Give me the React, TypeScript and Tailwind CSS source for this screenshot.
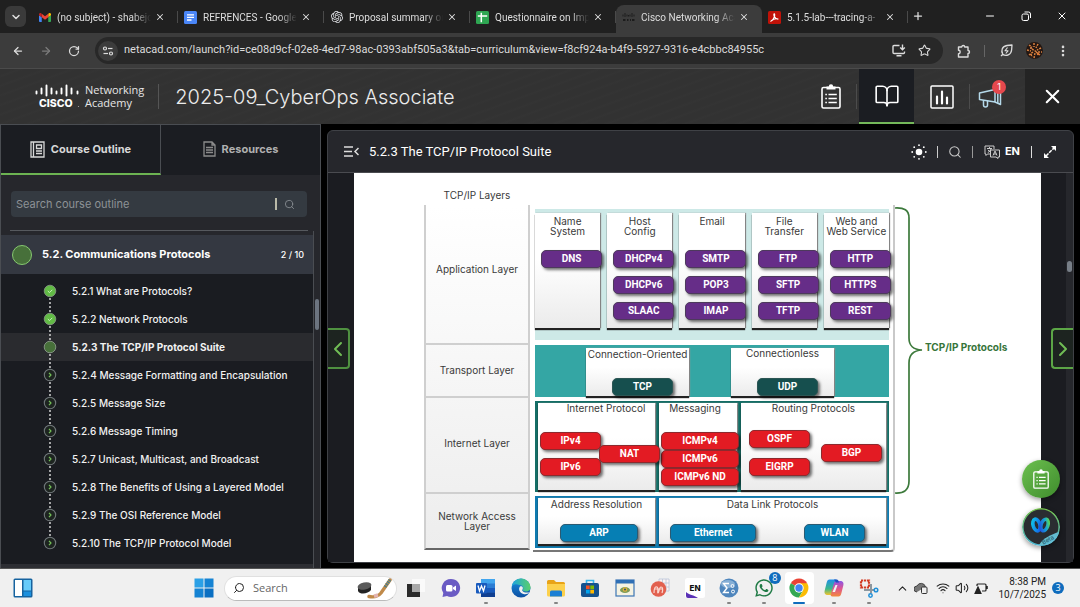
import React from 'react';
import {
  ArrowLeft, ArrowRight, ChevronDown, ChevronLeft, ChevronRight, ChevronUp, EllipsisVertical,
  Minus, Plus, RotateCw, Search, Star, Volume2, Wifi, X, BookOpen,
} from 'lucide-react';
import { SiOpenai } from 'react-icons/si';
import { FaWhatsapp } from 'react-icons/fa';

/* ---------- Browser chrome ---------- */

const GmailIcon = () => (
  <svg viewBox="0 0 24 18" className="h-[9px] w-3">
    <path d="M1.6 18H5.500V8.600L0 4.500V16.400C0 17.300.7 18 1.600 18z" fill="#4285f4" />
    <path d="M18.500 18h3.900c.9 0 1.600-.7 1.600-1.600V4.500l-5.500 4.100z" fill="#34a853" />
    <path d="M18.500 1.600v7L24 4.500V2.400c0-2-2.300-3.200-3.900-2z" fill="#fbbc04" />
    <path d="M5.500 8.600v-7L12 6.500l6.500-4.900v7L12 13.500z" fill="#ea4335" />
    <path d="M0 2.400v2.100l5.500 4.100v-7L3.900.4C2.300-.8 0 .4 0 2.400z" fill="#c5221f" />
  </svg>
);

const DocsIcon = () => (
  <svg viewBox="0 0 13 13" className="size-[13px]">
    <rect width="13" height="13" rx="1.500" fill="#4a86f7" />
    <path d="M3 3.800h7M3 6.400h7M3 9h4.500" stroke="#fff" strokeWidth="1.300" />
  </svg>
);

const SheetsIcon = () => (
  <svg viewBox="0 0 13 13" className="size-[13px]">
    <rect width="13" height="13" rx="1.500" fill="#2ea652" />
    <path d="M5.300 1.800v9.400M1.800 5h9.400" stroke="#fff" strokeWidth="1.500" />
  </svg>
);

const CiscoTabIcon = () => (
  <svg viewBox="0 0 13 10" className="h-[10px] w-[13px]">
    <path d="M1 2.500v2M3 1v4M5 2.500v2M6.500 3v1.500M8 2.500v2M10 1v4M12 2.500v2" stroke="#1c1c1c" strokeWidth="1" />
    <path d="M1 8h2.500M5 8h1.500M8 8h1M10 8h2.500" stroke="#1c1c1c" strokeWidth="2" />
  </svg>
);

const PdfIcon = () => (
  <svg viewBox="0 0 13 13" className="size-[13px]">
    <rect width="13" height="13" rx="1.500" fill="#c01208" />
    <path d="M2.800 10.200c1.600-.6 3-2.600 3.600-4.600.4-1.500.3-2.800-.1-2.800-.5 0-.6 1.300 0 2.600.8 1.700 2.200 2.700 4 2.700-2-.6-5 0-6.600 1.500" fill="none" stroke="#fff" strokeWidth="1.200" strokeLinecap="round" />
  </svg>
);

const tabs = [
  { title: '(no subject) - shabejc', icon: <GmailIcon /> },
  { title: 'REFRENCES - Google', icon: <DocsIcon /> },
  { title: 'Proposal summary or', icon: <SiOpenai className="size-3 text-gray-200" /> },
  { title: 'Questionnaire on Imp', icon: <SheetsIcon /> },
  { title: 'Cisco Networking Aca', icon: <CiscoTabIcon />, active: true },
  { title: '5.1.5-lab---tracing-a-', icon: <PdfIcon /> },
];

function TabStrip() {
  return (
    <div className="flex h-[33px] shrink-0 items-end bg-[#202020] text-[#dedede]">
      <button aria-label="Search tabs" className="mb-[6px] ml-[5px] mr-[6px] flex size-[21px] shrink-0 items-center justify-center rounded-md bg-[#3a3a3a]">
        <ChevronDown className="size-3" strokeWidth={3} />
      </button>
      <div role="tablist" className="flex min-w-0">
        {tabs.map((t) => (
          <div
            key={t.title}
            role="tab"
            aria-selected={!!t.active}
            className={
              t.active
                ? 'flex h-7 w-[146px] min-w-0 items-center rounded-t-lg bg-[#3c3c3c] pb-1 pl-[6px]'
                : 'flex h-7 w-[146px] min-w-0 items-center pb-1 pl-[6px]'
            }
          >
            <span className="flex w-[13px] shrink-0 justify-center">{t.icon}</span>
            <span className="ml-[6px] w-[94px] whitespace-nowrap font-[Roboto,sans-serif] text-[10px] [mask-image:linear-gradient(to_right,black_80%,transparent)]">
              {t.title}
            </span>
            <button aria-label={'Close ' + t.title} className="ml-1">
              <X className="size-[10px]" strokeWidth={2.5} />
            </button>
            {!t.active && <span className="ml-auto h-3 w-px bg-[#4a4a4a]" />}
          </div>
        ))}
      </div>
      <button aria-label="New tab" className="mb-[11px] ml-1"><Plus className="size-3" strokeWidth={2.500} /></button>
      <div className="mb-[11px] ml-auto mr-3 flex gap-[24px] text-white">
        <button aria-label="Minimize"><Minus className="size-3" /></button>
        <button aria-label="Restore">
          <svg viewBox="0 0 12 12" className="size-3" fill="none" stroke="currentColor" strokeWidth="1">
            <rect x="2" y="4" width="6.500" height="6.500" rx="1.500" />
            <path d="M4.500 2h4a2 2 0 0 1 2 2v4" />
          </svg>
        </button>
        <button aria-label="Close window"><X className="size-3" /></button>
      </div>
    </div>
  );
}

function Toolbar() {
  return (
    <div className="flex h-9 shrink-0 items-center border-b border-[#4b4b4b] bg-[#3c3c3c] pl-3 pr-[10px] text-[#dcdcdc]">
      <button aria-label="Back"><ArrowLeft className="size-3" strokeWidth={2.500} /></button>
      <button aria-label="Forward" className="ml-4 text-[#7b7b7b]"><ArrowRight className="size-3" strokeWidth={2.500} /></button>
      <button aria-label="Reload" className="ml-4"><RotateCw className="size-3" strokeWidth={2.500} /></button>
      <div className="ml-[15px] flex h-[27px] min-w-0 flex-1 items-center rounded-full bg-[#282828] pl-[3px] pr-3">
        <button aria-label="Site information" className="flex size-5 shrink-0 items-center justify-center rounded-full bg-[#3c3c3c]">
          <svg viewBox="0 0 12 12" className="size-3" fill="none" stroke="currentColor" strokeWidth="1.200">
            <circle cx="3" cy="3.500" r="1.500" /><path d="M6 3.500h4.500" />
            <circle cx="9" cy="8.500" r="1.500" /><path d="M1.500 8.500H6" />
          </svg>
        </button>
        <input
          aria-label="Address"
          readOnly
          value="netacad.com/launch?id=ce08d9cf-02e8-4ed7-98ac-0393abf505a3&tab=curriculum&view=f8cf924a-b4f9-5927-9316-e4cbbc84955c"
          className="ml-[6px] min-w-0 flex-1 bg-transparent font-[Roboto,sans-serif] text-[11px] outline-none"
        />
        <button aria-label="Install app">
          <svg viewBox="0 0 14 13" className="h-[13px] w-[14px]" fill="none" stroke="currentColor" strokeWidth="1.400">
            <path d="M7.500 1.500H2a1 1 0 0 0-1 1V8.500a1 1 0 0 0 1 1h9.500a1 1 0 0 0 1-1V7.500M4.500 11.800H9.500M10.500.5v5M8.200 3.500l2.300 2.300 2.300-2.300" />
          </svg>
        </button>
        <button aria-label="Bookmark" className="ml-3"><Star className="size-[13px]" /></button>
      </div>
      <button aria-label="Extensions" className="ml-[14px]">
        <svg viewBox="0 0 14 14" className="size-[14px]" fill="none" stroke="currentColor" strokeWidth="1.400" strokeLinejoin="round">
          <path d="M1.500 3h3.200a1.500 1.500 0 0 1 3 0H11v3.500a1.500 1.500 0 0 1 0 3V13H1.500V9.700a1.700 1.700 0 0 0 0-3.400z" />
        </svg>
      </button>
      <span className="ml-[13px] h-3 w-px bg-[#666]" />
      <button aria-label="Energy saver" className="ml-[15px]">
        <svg viewBox="0 0 13 13" className="size-[13px]" fill="none" stroke="currentColor" strokeWidth="1.300" strokeLinejoin="round">
          <path d="M1 12l1.800-1.800M2.800 10.200C.8 7 2 2 7 1.500l5-.5-.4 5C11.200 11 6 12.500 2.800 10.200z" />
          <path d="M7.500 3.500L5 6.800h3L5.800 9.500" strokeWidth="1.100" />
        </svg>
      </button>
      <button aria-label="Profile" className="ml-[13px]">
        <svg viewBox="0 0 17 17" className="size-[17px]">
          <circle cx="8.500" cy="8.500" r="8.500" fill="#241712" />
          <path d="M3 3l3 2M8 1v4M12 2l-2 4M15 6l-4 2M1 8l4 1M3 13l4-3M8 16l1-5M14 13l-4-3M6 7l5 3M12 10l4 0M5 12l1 3" stroke="#d9803f" strokeWidth="1.500" strokeDasharray="2 1" />
          <circle cx="5" cy="6" r="1" fill="#e8925a" /><circle cx="12" cy="12" r="1.200" fill="#e07a35" />
        </svg>
      </button>
      <button aria-label="Menu" className="ml-[13px]"><EllipsisVertical className="size-[14px]" strokeWidth={2.500} /></button>
    </div>
  );
}

/* ---------- Course header ---------- */

const ClipboardIcon = ({ className }: { className: string }) => (
  <svg viewBox="0 0 20 25" className={className} fill="none" stroke="currentColor" strokeWidth="1.600">
    <rect x="1" y="3.500" width="18" height="20.500" rx="1.500" />
    <path d="M5.500 2.500h2.300a2.200 2.200 0 0 1 4.400 0h2.300v3h-9z" fill="currentColor" stroke="none" />
    <path d="M4.300 10.500h1.600M4.300 14.500h1.600M4.300 18.500h1.600M7.500 10.500h8.300M7.500 14.500h8.300M7.500 18.500h8.300" />
  </svg>
);

function CourseHeader() {
  return (
    <header className="flex h-[55px] shrink-0 items-center bg-[repeating-linear-gradient(160deg,#323232_0,#323232_5px,#343434_7px,#323232_9px)] text-white">
      <a href="#home" aria-label="Cisco Networking Academy" className="ml-[35px] flex items-center">
        <svg viewBox="0 0 45 26" className="h-[26px] w-[45px]">
          <g stroke="#fff" strokeWidth="1.900" strokeLinecap="round">
            <path d="M1.500 7.500v2M6.500 4.500v5M11.500 1.500v10M16.500 4.500v5M21.500 7.500v2M26.500 4.500v5M31.500 1.500v10M36.500 4.500v5M42.500 7.500v2" />
          </g>
          <text x="4" y="23" fill="#fff" fontSize="10.500" fontWeight="800" fontFamily="Inter, sans-serif">CISCO</text>
          <circle cx="43.500" cy="22.500" r=".6" fill="#aaa" />
        </svg>
        <span className="ml-[5px] pb-[2px] font-['Open_Sans',sans-serif] text-[11px] leading-[13px] text-[#e6e6e6]">
          Networking<br />Academy
        </span>
      </a>
      <span className="ml-[14px] h-[25px] w-px bg-[#555]" />
      <h1 className="ml-4 whitespace-nowrap text-[20px] font-light text-[#ececec]">2025-09_CyberOps Associate</h1>
      <nav className="ml-auto flex h-full">
        <button aria-label="Tasks" className="flex w-[55px] items-center justify-between pl-[17px] pr-[2px]">
          <ClipboardIcon className="h-[25px] w-5" />
          <span className="h-[25px] w-px bg-[#4c4c4c]" />
        </button>
        <button aria-label="Course" className="flex w-[55px] items-center justify-center border-b-2 border-[#74b85a] bg-[#1b1d22] pt-px">
          <BookOpen className="size-[26px]" strokeWidth={1.500} />
        </button>
        <button aria-label="Grades" className="flex w-[55px] items-center justify-center">
          <svg viewBox="0 0 24 24" className="size-6" fill="none" stroke="currentColor" strokeWidth="1.500">
            <rect x="1" y="1" width="22" height="22" rx="1" />
            <path d="M7 11.500v7M12 6.500v12M17 12.500v6" strokeWidth="2.200" strokeLinecap="round" />
          </svg>
        </button>
        <button aria-label="Announcements" className="relative flex w-[56px] items-center">
          <span className="h-[25px] w-px bg-[#4c4c4c]" />
          <svg viewBox="0 0 24 22" className="ml-2 h-[22px] w-6" fill="none" stroke="#b5d9ea" strokeWidth="1.500" strokeLinejoin="round">
            <path d="M1.500 7L17 3.500V16L1.500 13.500z" />
            <path d="M17 3.500L22.500 1.500V18.500L17 16" />
            <path d="M19.800 3v14" />
            <path d="M5.500 14V19a2 2 0 0 0 4 0v-4.500" />
          </svg>
          <span className="absolute left-[23px] top-[11px] flex size-[14px] items-center justify-center rounded-full bg-[#e5484d] text-[9px]">1</span>
        </button>
        <button aria-label="Close course" className="flex w-[55px] items-center justify-center bg-[#242424]"><X className="size-[23px]" strokeWidth={2.200} /></button>
      </nav>
    </header>
  );
}

/* ---------- Sidebar ---------- */

const topics = [
  ['5.2.1 What are Protocols?', 'done'],
  ['5.2.2 Network Protocols', 'done'],
  ['5.2.3 The TCP/IP Protocol Suite', 'current'],
  ['5.2.4 Message Formatting and Encapsulation', 'todo'],
  ['5.2.5 Message Size', 'todo'],
  ['5.2.6 Message Timing', 'todo'],
  ['5.2.7 Unicast, Multicast, and Broadcast', 'todo'],
  ['5.2.8 The Benefits of Using a Layered Model', 'todo'],
  ['5.2.9 The OSI Reference Model', 'todo'],
  ['5.2.10 The TCP/IP Protocol Model', 'todo'],
];

function StatusDot({ state, last }: { state: string; last: boolean }) {
  return (
    <svg viewBox="0 0 14 28" className="h-7 w-[14px] shrink-0 overflow-visible">
      {!last && <path d="M7 21v14" stroke="#d0d0d0" strokeWidth="1.500" strokeDasharray="2 2" />}
      {state === 'todo' ? (
        <>
          <circle cx="7" cy="14" r="5.700" fill="#1d2420" stroke="#70777a" strokeWidth="1.100" />
          <path d="M6 11.800l2 2.200-2 2.200" fill="none" stroke="#74bf58" strokeWidth="1.200" />
        </>
      ) : state === 'done' ? (
        <>
          <circle cx="7" cy="14" r="5.800" fill="#62bb46" stroke="#8a9a88" strokeWidth="0.800" />
          <path d="M4.800 14l1.700 1.600 2.800-2.800" fill="none" stroke="#c9f0bb" strokeWidth="1" />
        </>
      ) : (
        <circle cx="7" cy="14" r="5.800" fill="#47703a" stroke="#8a9a88" strokeWidth="0.900" />
      )}
    </svg>
  );
}

function Sidebar() {
  return (
    <aside className="flex w-[321px] shrink-0 flex-col border-x border-t border-[#4a4d52] bg-[#26272c]">
      <div role="tablist" className="flex h-[50px] shrink-0 bg-[#1b1d22] text-[11px] font-bold">
        <button role="tab" aria-selected="true" className="flex flex-1 items-center justify-center gap-[6px] border-b-2 border-r border-b-[#6cb352] border-r-[#4a4d52] text-[#d8d8d8]">
          <svg viewBox="0 0 15 17" className="h-[17px] w-[15px]" fill="none" stroke="currentColor" strokeWidth="1.300">
            <path d="M1 1h13v15H1zM3.500 1v15" /><path d="M6.500 4h5v3.500h-5zM6 10h6M6 12.500h6" />
          </svg>
          Course Outline
        </button>
        <button role="tab" aria-selected="false" className="flex flex-1 items-center justify-center gap-[6px] pb-[2px] text-[#b0b0b0]">
          <svg viewBox="0 0 13 16" className="h-4 w-[13px]" fill="none" stroke="#8c8c8c" strokeWidth="1.300">
            <path d="M1 1h8l3 3v11H1zM9 1v3h3M3 6.500h7M3 9h7M3 11.500h7" />
          </svg>
          Resources
        </button>
      </div>
      <div className="ml-[10px] mr-[13px] mt-4 flex h-[26px] shrink-0 items-center rounded-sm bg-[#343a41] pl-[5px] pr-3">
        <input aria-label="Search course outline" placeholder="Search course outline" className="min-w-0 flex-1 bg-transparent text-[11px] outline-none placeholder:text-[#8d9296]" />
        <span className="mr-[7px] h-3 w-[2px] bg-[#b9b9a8]" />
        <Search className="size-[11px] text-[#8d9296]" strokeWidth={1.800} />
      </div>
      <div className="ml-[9px] mr-3 mt-[13px] h-px shrink-0 bg-[#56595e]" />
      <div className="flex min-h-0 flex-1">
        <div className="flex min-w-0 flex-1 flex-col border-r border-[#4a4d52] pt-1">
          <button className="flex h-[39px] shrink-0 items-center bg-[#343841] pl-[11px] pr-[9px] text-white">
            <span className="size-5 rounded-full border border-[#86c870] bg-[#47703a]" />
            <span className="ml-[10px] text-[11px] font-bold">5.2. Communications Protocols</span>
            <span className="ml-auto text-[9px] font-medium">2 / 10</span>
          </button>
          <ul className="flex-1 overflow-hidden bg-[#1a1c21] pt-[3px] text-[#f2f2f2]">
            {topics.map(([title, state], i) => (
              <li key={title}>
                <a
                  href={'#topic-' + (i + 1)}
                  className={
                    state === 'current'
                      ? 'flex h-7 items-center gap-[15px] bg-[#2a2b2f] pl-[42px] text-[10px] font-bold'
                      : 'flex h-7 items-center gap-[15px] pl-[42px] text-[10px] font-medium'
                  }
                >
                  <StatusDot state={state} last={i === topics.length - 1} />
                  <span className="whitespace-nowrap">{title}</span>
                </a>
              </li>
            ))}
          </ul>
          <div className="h-1 shrink-0 bg-[#2d2e33]" />
        </div>
        <div className="w-[6px] shrink-0 pl-px pt-[68px]"><div className="h-[31px] w-1 rounded-sm bg-[#6c7480]" /></div>
      </div>
    </aside>
  );
}

/* ---------- Protocol diagram ---------- */

const tones = {
  purple: 'bg-[#662d88] border-[#4d3a5c]',
  teal: 'bg-[#164f4e] border-[#2c5654]',
  red: 'bg-[#e31b23] border-[#8c2a2e]',
  blue: 'bg-[#067fb4] border-[#2b5a72]',
};

function Node({ name, tone, wide }: { name: string; tone: keyof typeof tones; wide?: string }) {
  return (
    <div className={`flex h-[18px] shrink-0 items-center justify-center rounded-[5px] border pb-px font-[Roboto,sans-serif] text-[10px] font-bold text-white shadow-[2px_2px_3px_rgba(0,0,0,0.55)] ${wide ?? 'w-[61px]'} ${tones[tone]}`}>
      {name}
    </div>
  );
}

const card = 'bg-linear-to-b from-white from-40% to-[#ebebeb] shadow-[0_2px_1px_#222,1px_0_1px_#999]';

const services = [
  { name: ['Name', 'System'], nodes: ['DNS'] },
  { name: ['Host', 'Config'], nodes: ['DHCPv4', 'DHCPv6', 'SLAAC'] },
  { name: ['Email'], nodes: ['SMTP', 'POP3', 'IMAP'] },
  { name: ['File', 'Transfer'], nodes: ['FTP', 'SFTP', 'TFTP'] },
  { name: ['Web and', 'Web Service'], nodes: ['HTTP', 'HTTPS', 'REST'] },
];

function Diagram() {
  return (
    <div className="flex pl-[70px] pt-4 text-[10px] leading-[10px] text-[#3a3a3a]">
      <div className="w-[106px] shrink-0 text-center">
        <div className="h-4 pt-px">TCP/IP Layers</div>
        <div className="flex flex-col divide-y-2 divide-[#cfcfcf] border-x-2 border-b-2 border-x-[#cfcfcf] border-b-[#666] bg-linear-to-b from-white to-[#ededed]">
          <div className="flex h-[140px] items-center justify-center pb-[10px]">Application Layer</div>
          <div className="flex h-[53px] items-center justify-center pb-[2px]">Transport Layer</div>
          <div className="flex h-24 items-center justify-center pb-1">Internet Layer</div>
          <div className="flex h-[54px] items-center justify-center">Network Access<br />Layer</div>
        </div>
      </div>

      <div className="ml-[3px] mt-4 w-[362px] shrink-0 rounded-br border-b-2 border-r-2 border-b-[#777] border-r-[#c9c9c9] pl-[2px] pr-1 pt-1">
        <div className="grid h-[131px] grid-cols-5 items-start gap-[7px] bg-[#cde9e7] pt-1">
          {services.map((s) => (
            <div key={s.name[0]} className={`h-[115px] text-center ${card}`}>
              <div className="-mx-2 h-[37px] pt-[3px]">
                {s.name.map((line) => <div key={line}>{line}</div>)}
              </div>
              <div className="flex flex-col gap-2 pl-[6px]">
                {s.nodes.map((n) => <Node key={n} name={n} tone="purple" />)}
              </div>
            </div>
          ))}
        </div>

        <div className="mt-[5px] flex h-[52px] gap-[42px] bg-[#34a6a4] pl-[51px] pt-[3px]">
          <div className={`flex h-12 w-[103px] flex-col text-center ${card}`}>
            <div className="flex-1 whitespace-nowrap pt-px">Connection-Oriented</div>
            <div className="pl-[26px]"><Node name="TCP" tone="teal" /></div>
          </div>
          <div className={`flex h-12 w-[103px] flex-col text-center ${card}`}>
            <div className="flex-1">Connectionless</div>
            <div className="pl-[26px]"><Node name="UDP" tone="teal" /></div>
          </div>
        </div>

        <div className="mt-1 flex h-[91px] gap-[4px] bg-[#146e66] px-[3px] pb-[2px] pt-[2px]">
          <div className={`w-[117px] ${card}`}>
            <div className="h-[29px] pl-[19px] text-center">Internet Protocol</div>
            <div className="flex items-center pl-[2px]">
              <div className="flex flex-col gap-2"><Node name="IPv4" tone="red" /><Node name="IPv6" tone="red" /></div>
              <div className="z-10 -ml-[2px]"><Node name="NAT" tone="red" /></div>
            </div>
          </div>
          <div className={`w-[78px] ${card}`}>
            <div className="h-[29px] pr-[6px] text-center">Messaging</div>
            <div className="flex flex-col pl-[2px]">
              <Node name="ICMPv4" tone="red" wide="w-[78px]" />
              <Node name="ICMPv6" tone="red" wide="w-[78px]" />
              <Node name="ICMPv6 ND" tone="red" wide="w-[78px]" />
            </div>
          </div>
          <div className={`flex-1 ${card}`}>
            <div className="h-[27px] text-center">Routing Protocols</div>
            <div className="flex items-center gap-[11px] pl-2">
              <div className="flex flex-col gap-[10px]"><Node name="OSPF" tone="red" /><Node name="EIGRP" tone="red" /></div>
              <Node name="BGP" tone="red" />
            </div>
          </div>
        </div>

        <div className="mb-[2px] mt-1 flex h-[52px] gap-[4px] bg-[#0f7bb0] px-[3px] pb-1 pt-[2px]">
          <div className={`w-[117px] ${card}`}>
            <div className="h-[26px] pt-px text-center">Address Resolution</div>
            <div className="pl-[22px]"><Node name="ARP" tone="blue" wide="w-[78px]" /></div>
          </div>
          <div className={`flex-1 ${card}`}>
            <div className="h-[26px] pt-px text-center">Data Link Protocols</div>
            <div className="flex gap-[48px] pl-[11px]">
              <Node name="Ethernet" tone="blue" wide="w-[86px]" /><Node name="WLAN" tone="blue" />
            </div>
          </div>
        </div>
      </div>

      <svg viewBox="0 0 28 290" className="mt-4 h-[290px] w-7 shrink-0" fill="none" stroke="#3d7a3c" strokeWidth="1.700">
        <path d="M0 3C9 2.500 14 5 14 13V133C14 141 18 144.500 27 145C18 145.500 14 150 14 158V276C14 285 9 288.500 0 288" />
      </svg>
      <div className="ml-[2px] mt-[153px] whitespace-nowrap font-bold text-[#37753a]">TCP/IP Protocols</div>
    </div>
  );
}

/* ---------- Content panel ---------- */

function Content() {
  return (
    <main className="relative mb-[5px] ml-[6px] mr-[6px] mt-[6px] flex min-w-0 flex-1 flex-col rounded-md border border-[#3f4146] bg-[#26272c] text-white">
      <div className="flex h-[42px] shrink-0 items-center border-b border-[#4a4b50] pl-4 pr-4">
        <button aria-label="Collapse outline">
          <svg viewBox="0 0 15 11" className="h-[11px] w-[15px]" fill="none" stroke="#ddd" strokeWidth="1.500">
            <path d="M0 1h9M0 5.500h8M0 10h9M14.500 2l-3.500 3.500L14.500 9" />
          </svg>
        </button>
        <h2 className="ml-[10px] font-[Roboto,sans-serif] text-[13px]">5.2.3 The TCP/IP Protocol Suite</h2>
        <div className="ml-auto flex items-center">
          <button aria-label="Theme">
            <svg viewBox="0 0 16 16" className="size-4" fill="#fff">
              <circle cx="8" cy="8" r="3.300" />
              <g><circle cx="8" cy="1.200" r=".9" /><circle cx="8" cy="14.800" r=".9" /><circle cx="1.200" cy="8" r=".9" /><circle cx="14.800" cy="8" r=".9" /><circle cx="3.200" cy="3.200" r=".9" /><circle cx="12.800" cy="3.200" r=".9" /><circle cx="3.200" cy="12.800" r=".9" /><circle cx="12.800" cy="12.800" r=".9" /></g>
            </svg>
          </button>
          <span className="ml-[10px] h-3 w-px bg-[#ccc]" />
          <button aria-label="Search" className="ml-[10px]"><Search className="size-[14px] text-[#ccc]" strokeWidth={1.800} /></button>
          <span className="ml-[10px] h-3 w-px bg-[#999]" />
          <button aria-label="Language" className="ml-[11px] flex items-center gap-[5px] text-[11px] font-bold">
            <svg viewBox="0 0 16 14" className="h-[14px] w-4" fill="none" stroke="#ccc" strokeWidth="1">
              <path d="M6 9H3.500L2 10.500V9H1V1h9v3M3 3.500h5M5.500 2v1.500M3.800 7.500c1.700-.8 2.800-2 3.200-4M4 4.800c.6 1 1.200 1.600 2 2" />
              <path d="M6.500 5h9v7H14v1.500L12 12H6.500zM9 10.500l2-4.500 2 4.500M9.800 9h2.500" />
            </svg>
            EN
          </button>
          <span className="ml-[11px] h-3 w-px bg-[#ddd]" />
          <button aria-label="Full screen" className="ml-[11px]">
            <svg viewBox="0 0 14 14" className="size-[14px]" fill="#fff" stroke="#fff">
              <path d="M3 11L11 3" strokeWidth="1.500" strokeDasharray="3.500 1" /><path d="M8 1H13v5zM1 8V13h5z" stroke="none" />
            </svg>
          </button>
        </div>
      </div>
      <div className="flex min-h-0 flex-1">
        <div className="flex w-[26px] shrink-0 flex-col bg-[#1b1c21] pt-[155px]">
          <button aria-label="Previous" className="flex h-[41px] w-[22px] items-center justify-center rounded-r-sm border-2 border-l-0 border-[#4f9140] bg-[#1d2420]">
            <ChevronLeft className="size-6 shrink-0 text-[#70bd55]" />
          </button>
        </div>
        <div className="min-w-0 flex-1 overflow-hidden bg-white"><Diagram /></div>
        <div className="flex w-[32px] shrink-0 flex-col bg-[linear-gradient(to_right,#1b1c21_25px,#26272c_25px)] pt-[88px]">
          <div className="ml-[26px] h-[11px] w-[5px] rounded-full bg-[#777e87]" />
          <button aria-label="Next" className="ml-[10px] mt-[56px] flex h-[41px] items-center justify-center rounded-l-sm border-2 border-r-0 border-[#5ca646] bg-[#1d2420]">
            <ChevronRight className="size-6 shrink-0 text-[#70bd55]" />
          </button>
        </div>
      </div>
      <button aria-label="Open notes" className="absolute bottom-[64px] right-[13px] flex size-[38px] items-center justify-center rounded-full bg-linear-to-br from-[#6cc04f] to-[#3f8c2d] shadow-[0_2px_5px_rgba(0,0,0,0.4)]">
        <ClipboardIcon className="h-5 w-4" />
      </button>
      <button aria-label="Assistant" className="absolute bottom-[16px] right-[13px] size-[38px] overflow-hidden rounded-full shadow-[0_2px_5px_rgba(0,0,0,0.4)]">
        <svg viewBox="0 0 38 38" className="size-[38px]">
          <defs>
            <linearGradient id="ring" x1="0" y1="0" x2="0" y2="1"><stop offset="0" stopColor="#74bf4b" /><stop offset="1" stopColor="#4cb5d0" /></linearGradient>
            <linearGradient id="wa" x1="0" y1="0" x2="1" y2="1"><stop offset="0" stopColor="#10c6e8" /><stop offset="1" stopColor="#1257e8" /></linearGradient>
            <linearGradient id="wb" x1="0" y1="1" x2="1" y2="0"><stop offset="0" stopColor="#1f4be0" /><stop offset=".6" stopColor="#17a5d6" /><stop offset="1" stopColor="#5fe04a" /></linearGradient>
          </defs>
          <circle cx="19" cy="19" r="18.200" fill="#2a2d31" stroke="url(#ring)" strokeWidth="1.600" />
          <ellipse cx="14.500" cy="17" rx="3.400" ry="6" transform="rotate(-16 14.500 17)" fill="none" stroke="url(#wa)" strokeWidth="3.600" />
          <ellipse cx="22.500" cy="17" rx="3.400" ry="6" transform="rotate(18 22.500 17)" fill="none" stroke="url(#wb)" strokeWidth="3.600" />
          <path d="M37 24C30 26 21 30 17 37C28 40 37 33 37 24z" fill="#63bcd0" />
          <text x="20" y="34.500" fontSize="6" fill="#1f5566" fontFamily="Inter, sans-serif" transform="rotate(-28 25 33)">Beta</text>
        </svg>
      </button>
    </main>
  );
}

/* ---------- Taskbar ---------- */

const Svg = ({ children }: { children: React.ReactNode }) => <svg viewBox="0 0 20 20" className="size-5">{children}</svg>;

const apps: { name: string; run?: boolean; active?: boolean; badge?: string; icon: React.ReactNode }[] = [
  { name: 'Task view', icon: <Svg><path d="M6 1h13v13H6z" fill="#fafafa" /><path d="M1 6h13v13H1z" fill="#2a2a2a" /><path d="M6 6h8v8H6z" fill="#a9a9a9" /></Svg> },
  { name: 'Chat', icon: <Svg><path d="M10 1a9 9 0 1 1-4 17l-4.500 1 .8-4A9 9 0 0 1 10 1z" fill="#6a5bc4" /><rect x="5" y="7" width="6.500" height="6.500" rx="1.500" fill="#fff" /><path d="M12 9.500l3-2v5.500l-3-2z" fill="#fff" /></Svg> },
  { name: 'Word', run: true, icon: <Svg><rect x="5" y="1" width="14" height="18" rx="1.500" fill="#2b7cd3" /><path d="M5 1h14v4.500H5z" fill="#41a5ee" /><path d="M5 10h14v4.500H5z" fill="#185abd" /><path d="M5 14.500h14V19H5z" fill="#103f91" /><rect y="5" width="11" height="10.500" rx="1" fill="#185abd" /><path d="M2 7.500l1.500 5.500L5.500 8l2 5L9 7.500" fill="none" stroke="#fff" strokeWidth="1.300" /></Svg> },
  { name: 'Edge', icon: <Svg>
    <defs>
      <linearGradient id="e1" x1="0" y1="0" x2="1" y2="0"><stop offset="0" stopColor="#1ba4e0" /><stop offset="1" stopColor="#5bd06a" /></linearGradient>
      <linearGradient id="e2" x1="0" y1="0" x2="0" y2="1"><stop offset="0" stopColor="#1b8fdd" /><stop offset="1" stopColor="#0c4fa3" /></linearGradient>
    </defs>
    <circle cx="10" cy="10" r="9.500" fill="url(#e2)" />
    <path d="M.6 9A9.500 9.500 0 0 1 19.500 9c.2 3-2 4.500-4.500 4.500-2.500 0-3.500-1-3-2 .8-1.500 0-4.500-3.500-4.500C5 5.500 1.500 6 .6 9z" fill="url(#e1)" />
    <path d="M9 8.500c-2 2.500-.5 6.500 3.500 7.500 2 .5 4.500 0 6-1.500-1-.3-5 1-7-1.500-.8-1 .8-2 .3-3.500C11.500 8.500 10 7.800 9 8.500z" fill="#f0f0f0" />
  </Svg> },
  { name: 'File Explorer', run: true, icon: <Svg><path d="M1 3.500A1.500 1.500 0 0 1 2.500 2H8l2 2h7.500A1.500 1.500 0 0 1 19 5.500V9H1z" fill="#e8a317" /><path d="M1 6h18v11a1.500 1.500 0 0 1-1.500 1.500h-15A1.500 1.500 0 0 1 1 17z" fill="#fcd04c" /><path d="M4 18.500V14a1.500 1.500 0 0 1 1.500-1.500h9A1.500 1.500 0 0 1 16 14v4.500z" fill="#1b7fd4" /></Svg> },
  { name: 'Microsoft Store', icon: <Svg><path d="M6.500 6V2.500h7V6" fill="none" stroke="#35b6ec" strokeWidth="1.600" /><rect x="1" y="5" width="18" height="14" rx="2" fill="#14538f" /><path d="M6 7.500h3.700v3.700H6z" fill="#f25022" /><path d="M10.300 7.500H14v3.700h-3.700z" fill="#7fba00" /><path d="M6 11.800h3.700v3.700H6z" fill="#00a4ef" /><path d="M10.300 11.800H14v3.700h-3.700z" fill="#ffb900" /></Svg> },
  { name: 'Packet capture', icon: <Svg><rect x="1" y="2" width="18" height="16" fill="#f5f2e2" stroke="#3c76b5" strokeWidth="1.200" /><path d="M1 2h18v3.500H1z" fill="#2f6fb5" /><ellipse cx="10" cy="12" rx="5" ry="3" fill="#7c9a58" /><circle cx="10" cy="11.500" r="2.300" fill="#e2b33a" /><circle cx="10" cy="11.500" r="1" fill="#33506b" /></Svg> },
  { name: 'Amos', icon: <Svg><path d="M9 1h10v12H9zM12.500 1v12M16 1v12M9 5h10M9 9h10" fill="#fdf3f3" stroke="#b7c4d8" strokeWidth=".8" /><circle cx="8.500" cy="11" r="7.800" fill="#e2604f" /><path d="M4 15c0-4 1-7 3-6s0 6 1 6 1-6 3-6 2 3 1 6M5 11h7" fill="none" stroke="#fbd7d0" strokeWidth="1.200" /></Svg> },
  { name: 'EndNote', icon: <Svg><rect width="20" height="20" rx="2.500" fill="#fff" /><path d="M1 14c3 3 8 3 12 6H3a2 2 0 0 1-2-2z" fill="#5a31b5" /><text x="4.500" y="12.500" fontSize="8" fontWeight="800" fill="#111" fontFamily="Inter, sans-serif">EN</text></Svg> },
  { name: 'SPSS', run: true, icon: <Svg><circle cx="10" cy="10" r="9.500" fill="#4f86bd" /><ellipse cx="9" cy="6" rx="7" ry="4" fill="#86afd6" /><path d="M10 5.500H4.500L8 10l-3.500 4.500H10" fill="none" stroke="#fff" strokeWidth="1.400" /><circle cx="13.500" cy="8" r="1.500" fill="none" stroke="#fff" /><circle cx="14" cy="13.500" r="1.500" fill="none" stroke="#fff" /></Svg> },
  { name: 'WhatsApp', run: true, badge: '8', icon: <FaWhatsapp className="size-5 text-[#1f7a45]" /> },
  { name: 'Chrome', run: true, active: true, icon: <Svg><circle cx="10" cy="10" r="9.500" fill="#fff" /><path d="M10 10L1.800 5.200A9.500 9.500 0 0 1 18.200 5.200z" fill="#ea4335" /><path d="M10 10L1.800 5.200A9.500 9.500 0 0 0 10 19.500l4-7z" fill="#34a853" /><path d="M10 5.300h8.200A9.500 9.500 0 0 1 10 19.500l4.200-7z" fill="#fbbc05" /><circle cx="10" cy="10" r="4.700" fill="#fff" /><circle cx="10" cy="10" r="3.700" fill="#4285f4" /></Svg> },
  { name: 'Copilot', run: true, icon: <Svg>
    <defs>
      <linearGradient id="c1" x1="0" y1="0" x2="0" y2="1"><stop offset="0" stopColor="#1f8fe8" /><stop offset=".6" stopColor="#3cb88a" /><stop offset="1" stopColor="#f3c22c" /></linearGradient>
      <linearGradient id="c2" x1="0" y1="0" x2="0" y2="1"><stop offset="0" stopColor="#8a55e8" /><stop offset=".5" stopColor="#e0568e" /><stop offset="1" stopColor="#f28a3c" /></linearGradient>
    </defs>
    <path d="M5.500 1.500h6c1.500 0 2 1 1.700 2L10 15c-.5 1.500-1.300 2-2.500 2H4c-3 0-4-2-3.300-4.500l2-8C3.200 2.500 4 1.500 5.500 1.500z" fill="url(#c1)" />
    <path d="M14.500 18.500h-6c-1.500 0-2-1-1.700-2L10 5c.5-1.500 1.300-2 2.500-2H16c3 0 4 2 3.300 4.500l-2 8c-.5 2-1.300 3-2.800 3z" fill="url(#c2)" />
    <path d="M11.500 7h2l-2.500 7H8.500z" fill="#f4f4f4" /><path d="M10 1.500h2.500c2 0 2 1.500 2.500 3h-3z" fill="#1c4fc0" />
  </Svg> },
  { name: 'Snipping Tool', run: true, icon: <Svg><path d="M2 2.500h8v7H2z" fill="none" stroke="#d23b22" strokeWidth="2.200" strokeDasharray="2.200 .8" /><path d="M5 12h10.500M12 6v9.500" stroke="#8d979e" strokeWidth="2" /><circle cx="17" cy="12" r="1.800" fill="none" stroke="#2190d8" strokeWidth="1.500" /><circle cx="11.500" cy="17.500" r="1.700" fill="none" stroke="#2190d8" strokeWidth="1.500" /></Svg> },
];

function Taskbar() {
  return (
    <footer className="grid h-[39px] shrink-0 grid-cols-[1fr_auto_1fr] items-center border-t border-[#555] bg-[#f0f0f0] text-[#222]">
      <button aria-label="Widgets" className="ml-[13px] justify-self-start">
        <svg viewBox="0 0 20 20" className="size-5"><rect x=".5" y=".5" width="19" height="19" rx="1.500" fill="#16639f" /><path d="M2 2h7v16H2z" fill="#fff" /><path d="M10.500 2H18v10.500h-7.500z" fill="#67cbfa" /><path d="M10.500 13.500H18V18h-7.500z" fill="#1c90dd" /></svg>
      </button>
      <div className="flex items-center">
        <button aria-label="Start">
          <svg viewBox="0 0 20 20" className="size-5" fill="#1583d3"><path d="M.5.5h9v9h-9z" fill="#2ba0e6" /><path d="M10.500.5h9v9h-9z" /><path d="M.5 10.500h9v9h-9z" /><path d="M10.500 10.500h9v9h-9z" fill="#0a6fc2" /></svg>
        </button>
        <div className="ml-[10px] flex h-[25px] w-[173px] items-center rounded-full border border-[#e0e0e0] border-b-[#bbb] bg-white pl-2 pr-1">
          <Search className="size-3 -scale-x-100" />
          <input aria-label="Search" placeholder="Search" className="ml-2 w-0 flex-1 bg-transparent text-[11px] outline-none placeholder:text-[#666]" />
          <svg viewBox="0 0 36 21" className="h-[21px] w-9 shrink-0">
            <path d="M2 9v4c2 4 10 3 13-1V7z" fill="#222" /><ellipse cx="8.500" cy="8" rx="7" ry="3.500" transform="rotate(-12 8.500 8)" fill="#5a5a5a" />
            <path d="M13 18.500c5 1 9 0 12-3.500L34 2" fill="none" stroke="#c08a4a" strokeWidth="3.400" strokeLinecap="round" />
            <path d="M18 18.200l4-1.200" stroke="#e3b5b2" strokeWidth="3.600" /><path d="M29 9L34 1.800" stroke="#4d7f8a" strokeWidth="3" strokeDasharray="1.500 1" />
          </svg>
        </div>
        <div className="ml-[2px] grid w-[487px] grid-cols-14">
          {apps.map((a) => (
            <button key={a.name} aria-label={a.name} className="flex justify-center">
              <span className={a.active ? 'relative flex h-8 w-[29px] items-center justify-center rounded bg-white' : 'relative flex h-8 w-[29px] items-center justify-center'}>
                {a.icon}
                {a.badge && <span className="absolute -right-[2px] top-0 flex size-3 items-center justify-center rounded-full bg-[#0f6cbd] text-[9px] text-white">{a.badge}</span>}
                {a.run && <span className={a.active ? 'absolute bottom-0 h-[2px] w-3 rounded-full bg-[#0f6cbd]' : 'absolute bottom-0 h-[2px] w-1 rounded-full bg-[#858585]'} />}
              </span>
            </button>
          ))}
        </div>
      </div>
      <div className="mr-[16px] flex items-center justify-self-end">
        <button aria-label="Show hidden icons"><ChevronUp className="size-[13px]" /></button>
        <svg viewBox="0 0 14 12" className="ml-[5px] h-3 w-[14px]"><path d="M3 10a3 3 0 0 1 0-6 4.500 4.500 0 0 1 8.500 1" fill="#777" stroke="#444" /><rect x="7.500" y="5" width="5.500" height="6.500" rx="1" fill="#eee" stroke="#333" /></svg>
        <Wifi className="ml-[8px] size-[14px]" strokeWidth={1.800} />
        <Volume2 className="ml-[5px] size-[14px]" strokeWidth={1.800} />
        <svg viewBox="0 0 14 12" className="ml-[5px] h-3 w-[14px]" fill="none" stroke="#222" strokeWidth="1.200"><path d="M3 4V3a1 1 0 0 1 1-1h7a1 1 0 0 1 1 1v5a1 1 0 0 1-1 1H8M13.200 4v3" /><path d="M4 5l3 6.500H1z" fill="#222" /></svg>
        <div className="ml-[10px] text-right font-[Roboto,sans-serif] text-[10px] leading-[13px]">8:38 PM<br />10/7/2025</div>
        <span className="ml-[6px] flex size-3 items-center justify-center rounded-full bg-[#0f6cbd] text-[9px] text-white">3</span>
      </div>
    </footer>
  );
}

export default function App() {
  return (
    <div className="flex h-screen flex-col bg-black font-['Open_Sans',sans-serif]">
      <TabStrip />
      <Toolbar />
      <div className="flex min-h-0 flex-1 flex-col font-[Inter,sans-serif]">
        <CourseHeader />
        <div className="flex min-h-0 flex-1">
          <Sidebar />
          <Content />
        </div>
      </div>
      <Taskbar />
    </div>
  );
}
